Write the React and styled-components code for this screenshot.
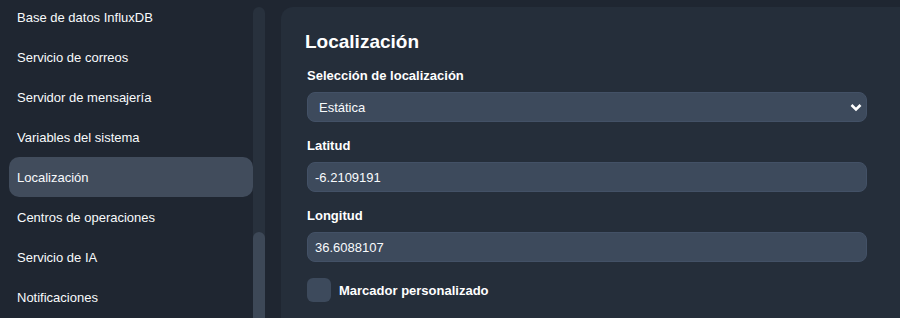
import React from 'react';
import styled, { createGlobalStyle } from 'styled-components';

const GlobalStyle = createGlobalStyle`
  html, body {
    margin: 0;
    padding: 0;
    background: #1f2631;
    font-family: "Liberation Sans", Arial, sans-serif;
    color: #f8fafc;
    overflow: hidden;
  }
`;

const menuItems = [
  'Base de datos InfluxDB',
  'Servicio de correos',
  'Servidor de mensajería',
  'Variables del sistema',
  'Localización',
  'Centros de operaciones',
  'Servicio de IA',
  'Notificaciones',
];

const Layout = styled.div`
  display: flex;
  height: 318px;
  overflow: hidden;
`;

const Sidebar = styled.nav`
  display: flex;
  flex-direction: column;
  width: 244px;
  padding-left: 9px;
  margin-top: -3px;
`;

const MenuItem = styled.div`
  height: 40px;
  display: flex;
  align-items: center;
  padding-left: 8px;
  border-radius: 10px;
  font-size: 13px;
  color: #f8fafc;
  background: ${(p) => (p.$active ? '#414c5c' : 'transparent')};
  flex-shrink: 0;
`;

const ScrollTrack = styled.div`
  width: 12px;
  margin-top: 7px;
  border-radius: 6px 6px 0 0;
  background: #28313d;
  display: flex;
  flex-direction: column;
`;

const ScrollThumb = styled.div`
  margin-top: 225px;
  flex: 1;
  border-radius: 6px 6px 0 0;
  background: #3d4857;
`;

const Panel = styled.main`
  flex: 1;
  margin: 7px 0 0 16px;
  padding: 23px 26px 0 24px;
  background: #252e3a;
  border-radius: 12px 0 0 0;
`;

const Title = styled.h1`
  margin: 0 0 14px;
  font-size: 19px;
  line-height: 24px;
  font-weight: 700;
  color: #ffffff;
`;

const Field = styled.div`
  display: flex;
  flex-direction: column;
  gap: 8px;
  margin: 0 0 16px 2px;
  width: 560px;
`;

const Label = styled.label`
  font-size: 13px;
  line-height: 16px;
  font-weight: 700;
  color: #ffffff;
`;

const SelectWrap = styled.div`
  position: relative;
  display: flex;
`;

const Select = styled.select`
  appearance: none;
  width: 100%;
  height: 30px;
  padding: 0 32px 0 11px;
  border: 1px solid #435166;
  border-radius: 8px;
  background: #3d4a5c;
  color: #f8fafc;
  font-family: inherit;
  font-size: 13px;
  outline: none;
`;

const Chevron = styled.svg`
  position: absolute;
  right: 4px;
  top: 11px;
  pointer-events: none;
`;

const Input = styled.input`
  height: 30px;
  box-sizing: border-box;
  padding: 0 7px;
  border: 1px solid #435166;
  border-radius: 8px;
  background: #3d4a5c;
  color: #f8fafc;
  font-family: inherit;
  font-size: 13px;
  outline: none;
`;

const CheckRow = styled.div`
  display: flex;
  align-items: center;
  gap: 8px;
  margin-left: 2px;
`;

const CheckBox = styled.span`
  width: 24px;
  height: 24px;
  border-radius: 6px;
  background: #3d4a5c;
`;

const CheckLabel = styled.span`
  font-size: 13px;
  font-weight: 700;
  color: #ffffff;
`;

export default function App() {
  return (
    <>
      <GlobalStyle />
      <Layout>
        <Sidebar>
          {menuItems.map((item) => (
            <MenuItem key={item} $active={item === 'Localización'}>
              {item}
            </MenuItem>
          ))}
        </Sidebar>
        <ScrollTrack>
          <ScrollThumb />
        </ScrollTrack>
        <Panel>
          <Title>Localización</Title>
          <Field>
            <Label>Selección de localización</Label>
            <SelectWrap>
              <Select defaultValue="static">
                <option value="static">Estática</option>
                <option value="dynamic">Dinámica</option>
              </Select>
              <Chevron width="14" height="9" viewBox="0 0 14 9">
                <polyline points="2.5,2 7,6.5 11.5,2" fill="none" stroke="#ffffff" strokeWidth="2.6" />
              </Chevron>
            </SelectWrap>
          </Field>
          <Field>
            <Label>Latitud</Label>
            <Input defaultValue="-6.2109191" />
          </Field>
          <Field>
            <Label>Longitud</Label>
            <Input defaultValue="36.6088107" />
          </Field>
          <CheckRow>
            <CheckBox />
            <CheckLabel>Marcador personalizado</CheckLabel>
          </CheckRow>
        </Panel>
      </Layout>
    </>
  );
}
